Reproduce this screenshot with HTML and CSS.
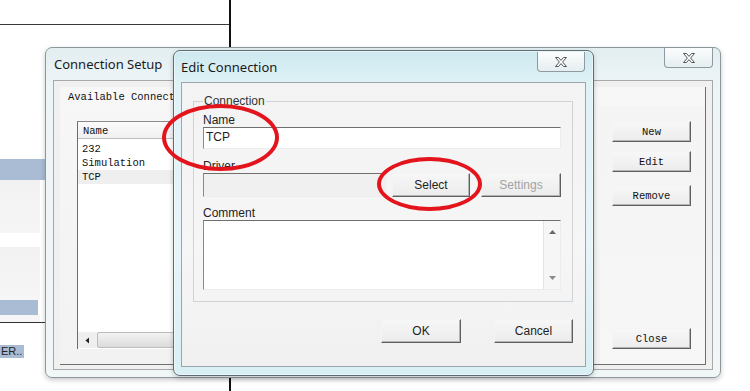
FILE: index.html
```html
<!DOCTYPE html>
<html lang="en">
<head>
<meta charset="utf-8">
<title>Connection Setup</title>
<link rel="stylesheet" href="styles.css">
</head>
<body>
<div class="bgpane">
  <div class="bg-top"></div>
  <div class="bg-frag">
    <div class="bg-sel"></div>
    <div class="bg-gray"></div>
    <div class="bg-white"></div>
    <div class="bg-gray"></div>
    <div class="bg-sel2"></div>
    <div class="bg-gap"></div>
    <div class="bg-rule"></div>
    <div class="bg-text"><span>ER..</span></div>
  </div>
</div>

<div class="win cs">
  <div class="titlebar">
    <span class="title">Connection Setup</span>
    <button class="xbtn" aria-label="Close"><svg width="14" height="12" viewBox="0 0 14 12"><path d="M1.5 1.5H4.5L7 4.4L9.5 1.5H12.5L8.6 6L12.5 10.5H9.5L7 7.6L4.5 10.5H1.5L5.4 6Z" fill="#fff" stroke="#555" stroke-width="1" stroke-linejoin="round"/></svg></button>
  </div>
  <div class="client cs-client">
    <div class="cs-panel">
      <div class="mono cs-label">Available Connections</div>
      <div class="cs-body">
        <div class="listbox">
          <div class="lb-head mono">Name</div>
          <div class="lb-items mono">
            <div class="lb-item">232</div>
            <div class="lb-item">Simulation</div>
            <div class="lb-item sel">TCP</div>
          </div>
          <div class="hscroll">
            <span class="arrow-l"><svg width="5" height="7" viewBox="0 0 5 7"><path d="M4 0.5V6.5L0.5 3.5Z" fill="#222"/></svg></span>
            <span class="thumb"></span>
          </div>
        </div>
        <div class="cs-side">
          <button class="btn mono">New</button>
          <button class="btn mono b-edit">Edit</button>
          <button class="btn mono b-remove">Remove</button>
          <button class="btn mono b-close">Close</button>
        </div>
      </div>
    </div>
  </div>
</div>

<div class="win ec">
  <div class="titlebar">
    <span class="title">Edit Connection</span>
    <button class="xbtn" aria-label="Close"><svg width="14" height="12" viewBox="0 0 14 12"><path d="M1.5 1.5H4.5L7 4.4L9.5 1.5H12.5L8.6 6L12.5 10.5H9.5L7 7.6L4.5 10.5H1.5L5.4 6Z" fill="#fff" stroke="#555" stroke-width="1" stroke-linejoin="round"/></svg></button>
  </div>
  <div class="client ec-client">
    <fieldset class="group">
      <legend>Connection</legend>
      <div class="lbl">Name</div>
      <div class="field name-field">TCP</div>
      <div class="lbl lbl-driver">Driver</div>
      <div class="driver-row">
        <div class="field driver-field"></div>
        <button class="btn b-select">Select</button>
        <button class="btn b-settings" disabled>Settings</button>
      </div>
      <div class="lbl lbl-comment">Comment</div>
      <div class="field memo">
        <div class="memo-text"></div>
        <div class="vscroll">
          <svg width="7" height="4" viewBox="0 0 7 4"><path d="M0 4L3.5 0L7 4Z" fill="#6a6a6a"/></svg>
          <svg width="7" height="4" viewBox="0 0 7 4"><path d="M0 0L3.5 4L7 0Z" fill="#8a8a8a"/></svg>
        </div>
      </div>
    </fieldset>
    <div class="ec-actions">
      <button class="btn b-ok">OK</button>
      <button class="btn b-cancel">Cancel</button>
    </div>
  </div>
</div>

<div class="ring ring-name"></div>
<div class="ring ring-select"></div>
</body>
</html>
```

FILE: styles.css
```css
* { box-sizing: border-box; margin: 0; padding: 0; }
html, body { width: 750px; height: 391px; overflow: hidden; background: #fff; }
body {
  position: relative;
  font-family: "Liberation Sans", Arial, sans-serif;
  font-size: 12px;
  color: #1e1e1e;
}
.mono { font-family: "Liberation Mono", "DejaVu Sans Mono", monospace; font-size: 10.5px; }

/* background application */
.bgpane {
  width: 231px;
  height: 391px;
  border-right: 2px solid #111;
}
.bg-top { height: 25px; border-bottom: 1px solid #3a3a3a; }
.bg-frag { margin-top: 134px; width: 46px; }
.bg-sel { height: 21px; background: #a9bcd3; }
.bg-gray { height: 53px; width: 40px; background: linear-gradient(180deg, #f1f1f1, #f6f6f6); }
.bg-white { height: 14px; }
.bg-sel2 { height: 15px; width: 38px; background: #a9bcd3; }
.bg-gap { height: 7px; width: 40px; background: #f6f6f6; }
.bg-rule { height: 1px; background: #333; }
.bg-text { margin-top: 22px; height: 13px; font-size: 11px; line-height: 13px; }
.bg-text span { display: inline-block; padding: 0 2px 0 1px; background: #a9bcd3; color: #222; }

/* windows */
.win {
  position: absolute;
  display: flex;
  flex-direction: column;
  border-radius: 7px;
  padding: 0 7px 7px;
}
.titlebar { display: flex; align-items: center; }
.title { font-family: "Noto Sans", "Open Sans", sans-serif; font-size: 13px; color: #1a1a1a; }
.xbtn {
  margin-left: auto;
  align-self: flex-start;
  display: flex;
  align-items: center;
  justify-content: center;
  width: 49px;
  height: 20px;
  border: 1px solid #8e9aa1;
  border-top: none;
  border-radius: 0 0 4px 4px;
  background: linear-gradient(180deg, #fbfdfd, #e6eef1);
}
.client { flex: 1; background: #f0f0f0; }

.cs {
  left: 45px; top: 47px; width: 676px; height: 331px;
  border: 1px solid #8c979c;
  background: linear-gradient(180deg, #e3eef1 0%, #eef5f7 12%, #f1f6f7 100%);
  box-shadow: 0 2px 5px rgba(0, 0, 0, 0.22);
}
.cs .titlebar { height: 32px; padding-left: 1px; }
.cs .xbtn { width: 49px; }
.cs-client {
  border: 1px solid #a8a8a8;
  padding: 6px 6px 4px;
  display: flex;
}
.cs-panel {
  flex: 1;
  display: flex;
  flex-direction: column;
  padding: 4px 0 0 8px;
  background: linear-gradient(180deg, #f7f7f7, #f2f2f2);
  border-right: 1px solid #6e6e6e;
  border-bottom: 1px solid #6e6e6e;
}
.cs-label { line-height: 12px; white-space: nowrap; color: #111; }
.cs-body { flex: 1; display: flex; }
.listbox {
  width: 200px;
  margin: 18px 0 15px 9px;
  display: flex;
  flex-direction: column;
  background: #fff;
  border-left: 1px solid #6d6d6d;
  border-top: 1px solid #8a8a8a;
}
.lb-head {
  height: 17px;
  line-height: 18px;
  padding-left: 5px;
  background: linear-gradient(180deg, #fbfbfb, #f0f0f0);
  border-bottom: 1px solid #bdbdbd;
  color: #111;
}
.lb-items { padding-top: 3px; color: #111; }
.lb-item { height: 14px; line-height: 14px; padding-left: 4px; }
.lb-item.sel { background: #efefef; }
.hscroll {
  margin-top: auto;
  margin-bottom: 1px;
  height: 16px;
  display: flex;
  background: #efefef;
}
.arrow-l { width: 19px; display: flex; align-items: center; justify-content: center; }
.thumb {
  flex: 1;
  border: 1px solid #bdbdbd;
  border-radius: 2px;
  background: linear-gradient(180deg, #f2f2f2, #dcdcdc);
}
.cs-side {
  width: 105px;
  margin: 4px 0 0 auto;
  padding: 14px 0 15px 12px;
  display: flex;
  flex-direction: column;
  background: linear-gradient(180deg, #f4f4f4, #f7f7f7);
}

/* buttons */
.btn {
  font: inherit;
  color: #1e1e1e;
  width: 79px;
  height: 21px;
  background: linear-gradient(180deg, #f7f7f7, #ececec);
  border: 1px solid;
  border-color: #f4f4f4 #5f5f5f #5f5f5f #f4f4f4;
  box-shadow: inset -1px -1px 0 #b4b4b4;
}
.cs-side .btn { font-family: "Liberation Mono", "DejaVu Sans Mono", monospace; font-size: 10.5px; color: #111; }
.b-edit { margin-top: 9px; }
.b-remove { margin-top: 13px; }
.b-close { margin-top: auto; }

.ec {
  left: 173px; top: 50px; width: 421px; height: 326px;
  border: 1px solid #5d6c75;
  background: linear-gradient(180deg, #cde9ef 0%, #dff2f6 10%, #e6f5f8 60%, #d8eff4 100%);
  box-shadow: 0 0 0 1px rgba(255,255,255,0.5) inset, 0 2px 5px rgba(0,0,0,0.2);
  padding-bottom: 8px;
}
.ec .titlebar { height: 31px; }
.ec .xbtn { width: 48px; margin-top: 1px; margin-right: 1px; }
.ec-client {
  border: 1px solid #9aa6ad;
  padding: 11px 12px 0 11px;
  background: linear-gradient(180deg, #f3f3f3, #f6f6f6 60%, #f0f0f0);
  display: flex;
  flex-direction: column;
}
.group {
  width: 380px;
  border: 1px solid #cdd3d6;
  padding: 0 11px 11px 9px;
}
.group legend { padding: 0 1px; line-height: 14px; color: #333; }
.lbl { line-height: 14px; margin-top: 5px; color: #222; }
.lbl-driver { margin-top: 10px; }
.lbl-comment { margin-top: 9px; }
.field {
  background: #fff;
  border: 1px solid;
  border-color: #6f6f6f #ececec #ececec #8a8a8a;
}
.name-field { height: 22px; line-height: 19px; padding-left: 2px; }
.driver-row { display: flex; height: 24px; }
.driver-field { flex: 1; background: #f0f0f0; }
.b-select { width: 78px; height: 24px; margin-left: 6px; }
.b-settings { width: 80px; height: 24px; margin-left: 11px; color: #a3a3a3; }
.memo { height: 70px; display: flex; }
.memo-text { flex: 1; }
.vscroll {
  width: 17px;
  display: flex;
  flex-direction: column;
  justify-content: space-between;
  align-items: center;
  padding: 9px 0 9px;
  background: #f6f6f6;
  border-left: 1px solid #e4e4e4;
}
.ec-actions {
  margin-top: 17px;
  display: flex;
  justify-content: flex-end;
  gap: 33px;
}
.b-ok { width: 80px; height: 24px; }
.b-cancel { width: 79px; height: 24px; }

/* red annotation rings */
.ring {
  position: absolute;
  border: 4px solid #e3141c;
  border-radius: 50%;
}
.ring-name { left: 162px; top: 104px; width: 117px; height: 67px; }
.ring-select { left: 377px; top: 157px; width: 105px; height: 54px; }
```
